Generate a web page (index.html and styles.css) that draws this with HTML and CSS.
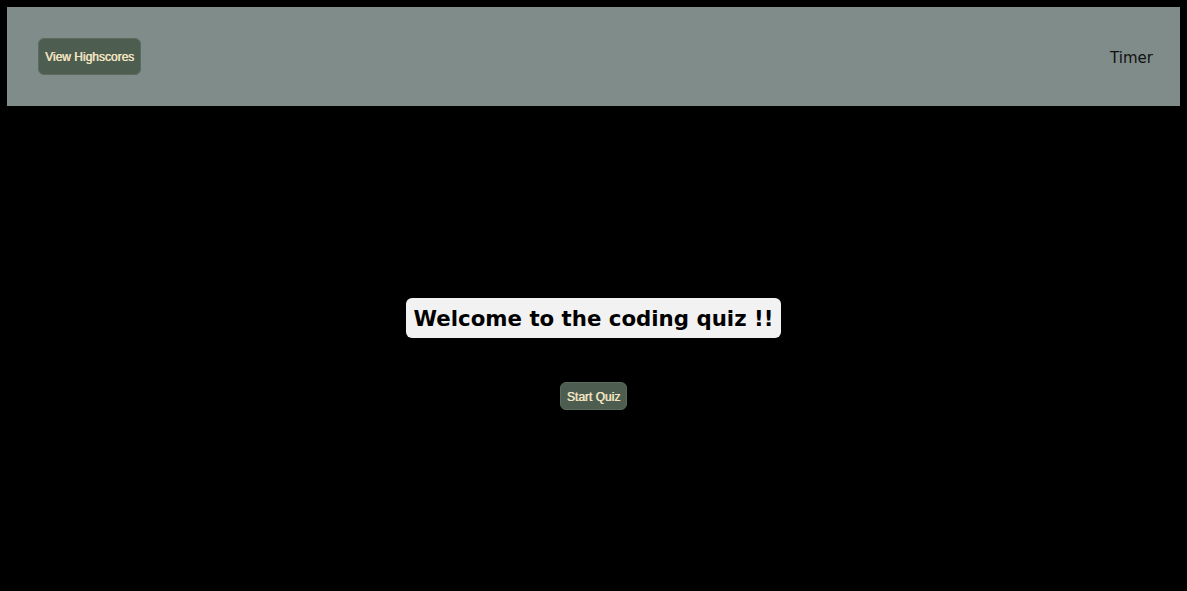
FILE: index.html
```html
<!DOCTYPE html>
<html lang="en">
<head>
<meta charset="utf-8">
<title>Coding Quiz</title>
<link rel="stylesheet" href="styles.css">
</head>
<body>
<header class="topbar">
  <button class="btn btn-scores">View Highscores</button>
  <div class="timer">Timer</div>
</header>
<main class="intro">
  <h1 class="welcome">Welcome to the coding quiz !!</h1>
  <button class="btn btn-start">Start Quiz</button>
</main>
</body>
</html>
```
FILE: styles.css
```css
html, body {
  background: #000;
}
body {
  margin: 7px;
  font-family: "DejaVu Sans", Verdana, sans-serif;
}
.topbar {
  height: 99px;
  background: #7f8c8a;
  display: flex;
  align-items: center;
  justify-content: space-between;
  padding: 0 27px 0 31px;
}
.btn {
  font-family: "Liberation Sans", Arial, sans-serif;
  font-weight: normal;
  font-size: 12px;
  color: #f3e4c1;
  text-shadow: 0.5px 0 0 #f3e4c1;
  background: #4d5e51;
  border: 1px solid #5b6b5f;
  border-radius: 6px;
  white-space: nowrap;
  cursor: pointer;
}
.btn-scores {
  width: 103px;
  height: 37px;
  padding: 1px 0 0;
}
.timer {
  font-size: 15px;
  color: #111;
  padding-top: 2px;
}
.intro {
  display: flex;
  flex-direction: column;
  align-items: center;
  padding-top: 192px;
}
.welcome {
  margin: 0;
  background: #f2f2f2;
  color: #000;
  font-size: 21.3px;
  font-weight: bold;
  height: 40px;
  line-height: 39px;
  padding: 1px 8px 0;
  box-sizing: border-box;
  border-radius: 6px;
}
.btn-start {
  margin-top: 44px;
  width: 67px;
  height: 28px;
  padding: 1px 0 0;
}
```
